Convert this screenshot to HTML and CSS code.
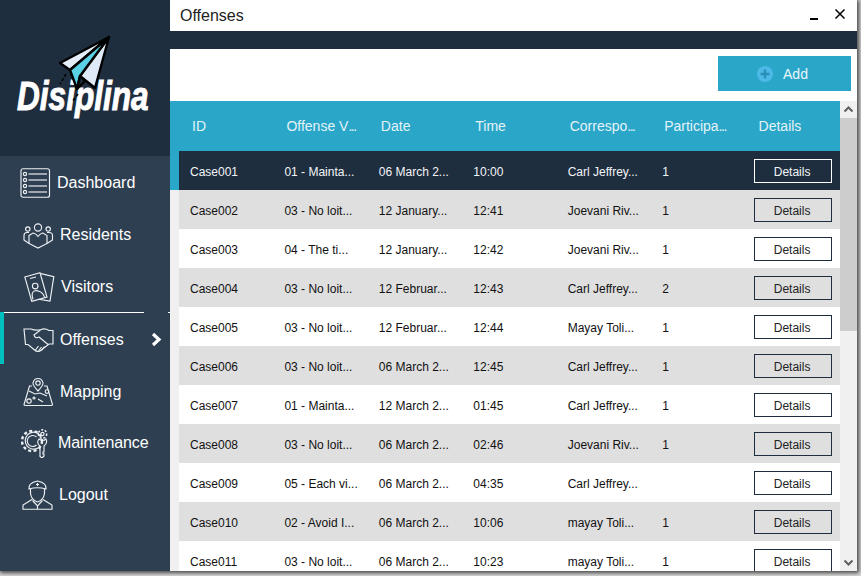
FILE: index.html
```html
<!DOCTYPE html>
<html lang="en">
<head>
    <meta charset="UTF-8">
    <meta name="viewport" content="width=device-width, initial-scale=1.0">
    <title>Offenses</title>
    <link rel="stylesheet" href="styles.css">
</head>
<body>

<div class="window">

    <!-- Sidebar -->
    <aside class="sidebar">
        <div class="logo">
            <span class="logo-text">Disiplina</span>
            <svg class="logo-plane" viewBox="0 0 170 155" width="170" height="155">
                <g stroke="#000" stroke-width="2.4" stroke-linejoin="round">
                    <polygon points="109,37 60,63 70,70" fill="#e3eef8"/>
                    <polygon points="109,37 80,76 95,88" fill="#e0eaf6"/>
                    <polygon points="109,37 70,70 77,89 80,76" fill="#5ad2e6"/>
                    <polygon points="77,89 80,76 85,81" fill="#1b2a38"/>
                </g>
                <path d="M66 74L60 84M78 94L72 102" stroke="#000" stroke-width="1.6" stroke-dasharray="3 2" fill="none"/>
            </svg>
        </div>

        <nav class="nav">
            <a class="nav-item nav-dashboard">
                <svg class="nav-icon" viewBox="0 0 31 30" width="31" height="30">
                    <rect x="1" y="0.75" width="28.5" height="28.5" rx="2"/>
                    <circle cx="5" cy="6" r="1.6"/><circle cx="5" cy="12" r="1.6"/>
                    <circle cx="5" cy="18" r="1.6"/><circle cx="5" cy="24" r="1.6"/>
                    <path class="thick" d="M8.5 6H27M8.5 12H27M8.5 18H27M8.5 24H27"/>
                </svg>
                <span>Dashboard</span>
            </a>
            <a class="nav-item">
                <svg class="nav-icon" viewBox="0 0 31 30" width="31" height="30">
                    <circle cx="15" cy="7.5" r="3.6"/>
                    <circle cx="4.8" cy="9" r="2.2"/><circle cx="25.2" cy="9" r="2.2"/>
                    <path d="M6 15.5L10 13Q12 13 15 16.5Q18 13 20 13L24 15.5V23.5L15 28L6 23.5Z"/>
                    <path d="M6 12.5H4Q1 12.5 1 15.5V20L6 23.5M24 12.5H26Q29.5 12.5 29.5 15.5V20L24 23.5"/>
                </svg>
                <span>Residents</span>
            </a>
            <a class="nav-item nav-visitors">
                <svg class="nav-icon" viewBox="0 0 31 30" width="31" height="30">
                    <path d="M0.8 5L16 0.8L23 25L7.8 29.4Z"/>
                    <path d="M17 1.6L29.8 4.7L26 29L14.5 27.2"/>
                    <path d="M6 6.5L12 5"/>
                    <circle cx="11.2" cy="14" r="2.8"/>
                    <path d="M9 27.5Q6.5 20 11 18.8Q13 18.2 15 19.2Q19 20.5 20.5 25"/>
                </svg>
                <span>Visitors</span>
            </a>
            <a class="nav-item nav-active">
                <svg class="nav-icon" viewBox="0 0 31 30" width="31" height="30">
                    <path d="M1 4H8Q13 6 18 4.5Q22 3 26 5.5H30V19H26L17 26Q14 27.5 11 24.5L5 19.5H2.5Z"/>
                    <path d="M17.5 5L11 10Q12 14 16 12L25 19.5"/>
                    <path d="M12.5 25L15.5 21M15.5 26L18.5 22M18.5 25.5L21.5 21.5"/>
                </svg>
                <span>Offenses</span>
                <svg class="chevron" viewBox="0 0 11 15" width="11" height="15">
                    <path d="M2 2L8 7.5L2 13"/>
                </svg>
            </a>
            <a class="nav-item nav-mapping">
                <svg class="nav-icon" viewBox="0 0 31 30" width="31" height="30">
                    <path d="M15 14Q9.5 8 10 6Q11 1.5 15 1.5Q19 1.5 20 6Q20.5 8 15 14Z"/>
                    <circle cx="15" cy="6" r="2.2"/>
                    <path d="M9 9H6.5L1 27.5Q1 28.5 2.5 28.5H28Q29.5 28.5 29.5 27.5L24 9H21"/>
                    <path d="M6 14L12 17L17 16L24 19M15 22L20 25"/>
                    <circle cx="6" cy="24" r="2.2"/><circle cx="24" cy="14.5" r="1.8"/>
                    <circle cx="11" cy="21" r="1"/>
                </svg>
                <span>Mapping</span>
            </a>
            <a class="nav-item nav-maintenance">
                <svg class="nav-icon" viewBox="0 0 31 30" width="31" height="30">
                    <circle class="teeth" cx="11" cy="13" r="10"/>
                    <path d="M18 6A8.5 8.5 0 1 0 17 20"/>
                    <path d="M15.5 9A5.5 5.5 0 1 0 15.5 17"/>
                    <circle class="teeth small" cx="21.5" cy="6" r="4.2"/>
                    <circle cx="21.5" cy="6" r="1.6"/>
                    <path d="M18 11Q15 15 19 18V28.5L21 30L23 28V26H22V24H23V18Q27 15 25 11Q22 14 18 11Z"/>
                </svg>
                <span>Maintenance</span>
            </a>
            <a class="nav-item nav-logout">
                <svg class="nav-icon" viewBox="0 0 31 30" width="31" height="30">
                    <path d="M7 9Q6 3 15.5 1Q25 3 24 9Q15.5 6.5 7 9Z"/>
                    <path d="M8.5 9V13Q9 20 15.5 22Q22 20 22.5 13V9"/>
                    <path d="M15.5 3V6M14 4.5H17"/>
                    <path d="M10 19.5L1 25V29.2H30V25L21 19.5"/>
                    <path d="M10.5 20.5L15.5 26L20.5 20.5M15.5 26V29"/>
                </svg>
                <span>Logout</span>
            </a>
        </nav>
    </aside>

    <!-- Contenido -->
    <main class="content">
        <header class="titlebar">
            <span class="title">Offenses</span>
            <svg class="win-btn min" viewBox="0 0 8 3" width="8" height="3"><rect width="8" height="2" y="1"/></svg>
            <svg class="win-btn close" viewBox="0 0 10 10" width="10" height="10"><path d="M0.5 0.5L9.5 9.5M9.5 0.5L0.5 9.5"/></svg>
        </header>
        <div class="darkbar"></div>

        <div class="toolbar">
            <button class="add-btn" type="button">
                <svg viewBox="0 0 16 16" width="16" height="16">
                    <circle cx="8" cy="8" r="8" fill="#4db9e6"/>
                    <path d="M8 3.5V12.5M3.5 8H12.5" stroke="#2a8fb8" stroke-width="2.4"/>
                </svg>
                Add
            </button>
        </div>

        <div class="table-area">
            <div class="table">
                <div class="thead">
                    <div>ID</div><div>Offense V<span class="dots">...</span></div><div>Date</div><div>Time</div>
                    <div>Correspo<span class="dots">...</span></div><div>Participa<span class="dots">...</span></div><div>Details</div>
                </div>
                <div class="row selected">
                    <div>Case001</div><div>01 - Mainta...</div><div>06 March 2...</div><div>10:00</div>
                    <div>Carl Jeffrey...</div><div>1</div><div class="cell-btn"><button class="details" type="button">Details</button></div>
                </div>
                <div class="row">
                    <div>Case002</div><div>03 - No loit...</div><div>12 January...</div><div>12:41</div>
                    <div>Joevani Riv...</div><div>1</div><div class="cell-btn"><button class="details" type="button">Details</button></div>
                </div>
                <div class="row">
                    <div>Case003</div><div>04 - The ti...</div><div>12 January...</div><div>12:42</div>
                    <div>Joevani Riv...</div><div>1</div><div class="cell-btn"><button class="details" type="button">Details</button></div>
                </div>
                <div class="row">
                    <div>Case004</div><div>03 - No loit...</div><div>12 Februar...</div><div>12:43</div>
                    <div>Carl Jeffrey...</div><div>2</div><div class="cell-btn"><button class="details" type="button">Details</button></div>
                </div>
                <div class="row">
                    <div>Case005</div><div>03 - No loit...</div><div>12 Februar...</div><div>12:44</div>
                    <div>Mayay Toli...</div><div>1</div><div class="cell-btn"><button class="details" type="button">Details</button></div>
                </div>
                <div class="row">
                    <div>Case006</div><div>03 - No loit...</div><div>06 March 2...</div><div>12:45</div>
                    <div>Carl Jeffrey...</div><div>1</div><div class="cell-btn"><button class="details" type="button">Details</button></div>
                </div>
                <div class="row">
                    <div>Case007</div><div>01 - Mainta...</div><div>12 March 2...</div><div>01:45</div>
                    <div>Carl Jeffrey...</div><div>1</div><div class="cell-btn"><button class="details" type="button">Details</button></div>
                </div>
                <div class="row">
                    <div>Case008</div><div>03 - No loit...</div><div>06 March 2...</div><div>02:46</div>
                    <div>Joevani Riv...</div><div>1</div><div class="cell-btn"><button class="details" type="button">Details</button></div>
                </div>
                <div class="row">
                    <div>Case009</div><div>05 - Each vi...</div><div>06 March 2...</div><div>04:35</div>
                    <div>Carl Jeffrey...</div><div></div><div class="cell-btn"><button class="details" type="button">Details</button></div>
                </div>
                <div class="row">
                    <div>Case010</div><div>02 - Avoid I...</div><div>06 March 2...</div><div>10:06</div>
                    <div>mayay Toli...</div><div>1</div><div class="cell-btn"><button class="details" type="button">Details</button></div>
                </div>
                <div class="row">
                    <div>Case011</div><div>03 - No loit...</div><div>06 March 2...</div><div>10:23</div>
                    <div>mayay Toli...</div><div>1</div><div class="cell-btn"><button class="details" type="button">Details</button></div>
                </div>
            </div>

            <div class="scrollbar">
                <svg viewBox="0 0 17 17" width="17" height="17"><path d="M4.5 10.5L8.5 6.5L12.5 10.5"/></svg>
                <div class="thumb"></div>
                <div class="track"></div>
                <svg viewBox="0 0 17 17" width="17" height="17"><path d="M4.5 6.5L8.5 10.5L12.5 6.5"/></svg>
            </div>
        </div>
    </main>
</div>

</body>
</html>
```

FILE: styles.css
```css
* {
    box-sizing: border-box;
}
html, body {
    height: 100%;
}
body {
    margin: 0;
    overflow: hidden;
    background-color: #d8d8d8;
    font-family: "Liberation Sans", Arial, sans-serif;
}
.window {
    display: flex;
    width: 857px;
    height: 571px;
    background-color: white;
    box-shadow: 1px 1px 4px 1px #444;
}

/* Sidebar */
.sidebar {
    display: flex;
    flex-direction: column;
    width: 170px;
    flex-shrink: 0;
    background-color: #2e3f52;
    color: white;
}
.logo {
    position: relative;
    height: 156px;
    padding: 73px 0 0 17px;
    background-color: #1f2e3f;
}
.logo-text {
    display: block;
    font-size: 41px;
    line-height: 46px;
    font-weight: bold;
    font-style: italic;
    color: white;
    -webkit-text-stroke: 1px white;
    transform: scaleX(0.77);
    transform-origin: left center;
}
.logo-plane {
    position: absolute;
    left: 0;
    top: 0;
}
.nav-item {
    display: flex;
    align-items: center;
    gap: 6px;
    height: 52px;
    padding-top: 1px;
    padding-left: 23px;
    font-size: 16px;
    color: white;
}
.nav-dashboard {
    padding-left: 20px;
}
.nav-visitors {
    padding-left: 24px;
}
.nav-mapping {
    padding-top: 3px;
}
.nav-maintenance {
    padding-left: 21px;
    letter-spacing: -0.1px;
}
.nav-logout {
    padding-left: 22px;
}
.nav-active {
    padding-top: 3px;
    padding-left: 19px;
    border-left: 4px solid #00bfbf;
    background-image: linear-gradient(90deg, white 140px, transparent 140px, transparent 164px, white 164px);
    background-size: 100% 1px;
    background-repeat: no-repeat;
}
.nav-icon {
    flex-shrink: 0;
    fill: none;
    stroke: #eef1f4;
    stroke-width: 1.15;
}
.nav-icon .thick {
    stroke: #c3cad1;
    stroke-width: 1.6;
}
.nav-icon .teeth {
    stroke-width: 2.4;
    stroke-dasharray: 3 2.5;
}
.nav-icon .teeth.small {
    stroke-width: 1.6;
    stroke-dasharray: 2 1.6;
}
.chevron {
    margin-left: 21px;
    fill: none;
    stroke: white;
    stroke-width: 3.2;
}

/* Contenido */
.content {
    display: flex;
    flex-direction: column;
    flex: 1;
    min-width: 0;
}
.titlebar {
    display: flex;
    align-items: center;
    height: 31px;
    padding: 0 12px 2px 10px;
    flex-shrink: 0;
}
.title {
    flex: 1;
    margin-top: 2px;
    font-size: 16px;
    color: #222;
}
.win-btn {
    fill: #000;
    stroke: #000;
}
.win-btn.min {
    stroke: none;
    margin: 8px 17px 0 0;
}
.win-btn.close {
    margin-top: -1px;
    stroke-width: 1.5;
    fill: none;
}
.darkbar {
    height: 18px;
    flex-shrink: 0;
    background-color: #1f2e3f;
}
.toolbar {
    display: flex;
    justify-content: flex-end;
    height: 52px;
    flex-shrink: 0;
    padding: 7px 6px 0 0;
}
.add-btn {
    display: flex;
    align-items: center;
    justify-content: center;
    gap: 10px;
    width: 133px;
    height: 35px;
    padding: 0 4px 0 0;
    border: none;
    background-color: #29a6c8;
    color: #eaf6fa;
    font-family: inherit;
    font-size: 14px;
}

/* Tabla */
.table-area {
    display: flex;
    flex: 1;
    min-height: 0;
    overflow: hidden;
    background-color: #f0f0f0;
}
.table {
    flex: 1;
    min-width: 0;
}
.thead, .row {
    display: grid;
    grid-template-columns: repeat(7, 1fr);
    align-items: center;
    border-left: 9px solid #f0f0f0;
}
.thead {
    height: 50px;
    border-left-color: #29a6c8;
    background-color: #29a6c8;
    color: #e4f3f8;
    font-size: 14px;
}
.thead div {
    padding-left: 13px;
}
.dots {
    letter-spacing: -1.5px;
}
.row {
    height: 39px;
    background-color: white;
    color: #111;
    font-size: 12px;
}
.row:nth-child(odd) {
    background-color: #dfdfdf;
}
.row div {
    padding: 2px 0 0 11px;
}
.row .cell-btn {
    padding: 1px 0 0 8px;
}
.row.selected {
    background-color: #1f2e3f;
    border-left-color: #29a6c8;
    color: #f2f5f7;
}
.details {
    display: block;
    width: 78px;
    height: 24px;
    padding: 1px 1px 0 0;
    border: 1px solid #1f2e3f;
    background: transparent;
    color: #222;
    font-family: inherit;
    font-size: 12px;
}
.selected .details {
    border-color: white;
    color: #f2f5f7;
}

/* Barra de desplazamiento */
.scrollbar {
    display: flex;
    flex-direction: column;
    width: 17px;
    flex-shrink: 0;
    background-color: #f0f0f0;
}
.scrollbar svg {
    flex-shrink: 0;
    fill: none;
    stroke: #606060;
    stroke-width: 2;
}
.thumb {
    height: 213px;
    flex-shrink: 0;
    background-color: #cdcdcd;
}
.track {
    flex: 1;
}
```
